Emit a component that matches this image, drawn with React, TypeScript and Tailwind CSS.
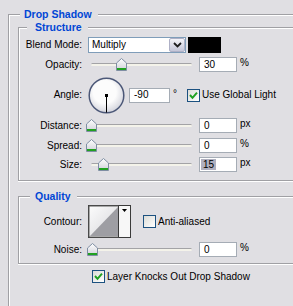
import React from 'react';

function Thumb() {
  return (
    <svg width="11" height="13" viewBox="0 0 11 13">
      <defs>
        <linearGradient id="thumbFill" x1="0" y1="0" x2="0" y2="1">
          <stop offset="0" stopColor="#ffffff" />
          <stop offset="1" stopColor="#cfd0d8" />
        </linearGradient>
      </defs>
      <path d="M5.5 0.5 L10.5 5 V12.5 H0.5 V5 Z" fill="url(#thumbFill)" stroke="#7f8ea3" />
      <rect x="1" y="10" width="9" height="2" fill="#21a121" />
    </svg>
  );
}

function Slider({ pos }: { pos: number }) {
  return (
    <div className="relative w-[108px] h-[15px] flex items-center shrink-0">
      <div className="ml-[3px] w-[101px] h-[3px] rounded-full border-t border-[#a3a3a6] bg-[#f4f3ea]" />
      <div className="absolute top-[1px]" style={{ left: pos - 5.5 }}>
        <Thumb />
      </div>
    </div>
  );
}

function NumBox({ value, wide, selected }: { value: string; wide?: boolean; selected?: boolean }) {
  return (
    <div
      className={`${wide ? 'w-[41px] ml-[4px]' : 'w-[38px] ml-[3px]'} h-[15px] shrink-0 bg-white border border-[#a5acb5] flex items-center ${selected ? 'pl-[1px]' : 'pl-[4px]'}`}
    >
      {selected ? <span className="bg-[#b0b0bf] px-[2px] leading-[11px]">{value}</span> : <span>{value}</span>}
    </div>
  );
}

function Unit({ children }: { children: React.ReactNode }) {
  return <span className="ml-[3px] self-start leading-[10px] mt-[1px]">{children}</span>;
}

function Check({ checked }: { checked?: boolean }) {
  return (
    <div className="w-[13px] h-[13px] shrink-0 border border-[#1c5180] bg-linear-to-br from-[#dcdcd7] to-white flex items-center justify-center">
      {checked && (
        <svg width="9" height="9" viewBox="0 0 9 9">
          <path d="M1 4 L3.5 6.8 L8 1.6" stroke="#21a121" strokeWidth="2" fill="none" />
        </svg>
      )}
    </div>
  );
}

function Row({ label, className, children }: { label: string; className: string; children: React.ReactNode }) {
  return (
    <div className={`flex items-center ${className}`}>
      <span className="w-[63px] shrink-0 text-right">{label}</span>
      <div className="ml-[6px] flex items-center">{children}</div>
    </div>
  );
}

export default function App() {
  return (
    <div className="w-[293px] h-[306px] overflow-hidden bg-[#e0dfe3] font-['Liberation_Sans',Arial,sans-serif] text-[10px] leading-none text-black">
      <div className="pt-[14px] pl-[8px]">
        {/* Drop Shadow group */}
        <div className="relative w-[320px] h-[320px] border-l border-t border-[#a0a0a4] shadow-[inset_1px_1px_0_#fff] pl-[9px] pt-[12px]">
          <span className="absolute top-[-7px] left-[11px] bg-[#e0dfe3] pl-[4px] pr-[6px] leading-[12px] text-[10.5px] font-bold text-[#0046d5]">
            Drop Shadow
          </span>

          {/* Structure */}
          <div className="relative w-[300px] h-[154px] border-l border-t border-b border-[#a0a0a4] shadow-[inset_1px_1px_0_#fff,0_1px_0_#fff] pt-[9px]">
            <span className="absolute top-[-7px] left-[8px] bg-[#e0dfe3] pl-[8px] pr-[6px] leading-[12px] text-[10.5px] font-bold text-[#0046d5]">
              Structure
            </span>

            <Row label="Blend Mode:" className="h-[16px]">
              <div className="w-[98px] h-[16px] bg-white border border-[#7f9db9] flex items-center">
                <span className="pl-[3px] flex-1">Multiply</span>
                <div className="w-[16px] h-full bg-linear-to-b from-[#f4f4f8] to-[#c4c6d8] border border-[#aeb0c6] rounded-[2px] flex items-center justify-center">
                  <svg width="9" height="6" viewBox="0 0 9 6">
                    <path d="M1 1 L4.5 4.5 L8 1" stroke="#1e1e1e" strokeWidth="1.8" fill="none" />
                  </svg>
                </div>
              </div>
              <div className="ml-[2px] w-[33px] h-[16px] bg-black" />
            </Row>

            <Row label="Opacity:" className="mt-[4px] h-[15px]">
              <Slider pos={33.3} />
              <NumBox value="30" />
              <Unit>%</Unit>
            </Row>

            <Row label="Angle:" className="mt-[5px] h-[36px]">
              <svg width="37" height="37" viewBox="0 0 37 37" className="shrink-0">
                <defs>
                  <radialGradient id="dialFill" cx="45%" cy="40%" r="60%">
                    <stop offset="0.55" stopColor="#fcfcfc" />
                    <stop offset="1" stopColor="#d4d5dd" />
                  </radialGradient>
                </defs>
                <circle cx="18.5" cy="18.5" r="17.3" fill="url(#dialFill)" stroke="#4c5878" strokeWidth="1.5" />
                <rect x="17" y="17" width="3" height="3" fill="#000" />
                <line x1="18.5" y1="18" x2="18.5" y2="35.5" stroke="#000" strokeWidth="1" />
              </svg>
              <NumBox value="-90" wide />
              <span className="ml-[3px] mb-[3px]">°</span>
              <div className="ml-[10px]">
                <Check checked />
              </div>
              <span className="ml-[2px]">Use Global Light</span>
            </Row>

            <Row label="Distance:" className="mt-[5px] h-[15px]">
              <Slider pos={3.7} />
              <NumBox value="0" />
              <Unit>px</Unit>
            </Row>

            <Row label="Spread:" className="mt-[5px] h-[15px]">
              <Slider pos={3.7} />
              <NumBox value="0" />
              <Unit>%</Unit>
            </Row>

            <Row label="Size:" className="mt-[4px] h-[15px]">
              <Slider pos={15.5} />
              <NumBox value="15" selected />
              <Unit>px</Unit>
            </Row>
          </div>

          {/* Quality */}
          <div className="relative mt-[15px] w-[300px] h-[68px] border-l border-t border-b border-[#a0a0a4] shadow-[inset_1px_1px_0_#fff,0_1px_0_#fff] pt-[8px]">
            <span className="absolute top-[-7px] left-[11px] bg-[#e0dfe3] pl-[5px] pr-[6px] leading-[12px] text-[10.5px] font-bold text-[#0046d5]">
              Quality
            </span>

            <Row label="Contour:" className="h-[33px]">
              <svg width="43" height="33" viewBox="0 0 43 33" className="shrink-0">
                <defs>
                  <linearGradient id="contourFill" x1="0" y1="0" x2="1" y2="1">
                    <stop offset="0" stopColor="#fbfbfb" />
                    <stop offset="1" stopColor="#d6d6da" />
                  </linearGradient>
                </defs>
                <rect x="0.5" y="0.5" width="42" height="32" fill="#f7f7f7" stroke="#3a3a3a" />
                <rect x="1" y="1" width="29.5" height="31" fill="none" stroke="#5a5a5a" strokeWidth="1" />
                <rect x="2" y="2" width="28" height="29" fill="url(#contourFill)" />
                <polygon points="2,31 30,2 30,31" fill="#9e9ea3" />
                <line x1="30.5" y1="0.5" x2="30.5" y2="32.5" stroke="#3a3a3a" />
                <polygon points="34,4 39,4 36.5,7" fill="#000" />
              </svg>
              <div className="ml-[12px]">
                <Check />
              </div>
              <span className="ml-[2px]">Anti-aliased</span>
            </Row>

            <Row label="Noise:" className="mt-[4px] h-[15px]">
              <Slider pos={4.5} />
              <NumBox value="0" />
              <Unit>%</Unit>
            </Row>
          </div>

          <div className="mt-[6px] ml-[74px] flex items-center">
            <Check checked />
            <span className="ml-[2px]">Layer Knocks Out Drop Shadow</span>
          </div>
        </div>
      </div>
    </div>
  );
}
